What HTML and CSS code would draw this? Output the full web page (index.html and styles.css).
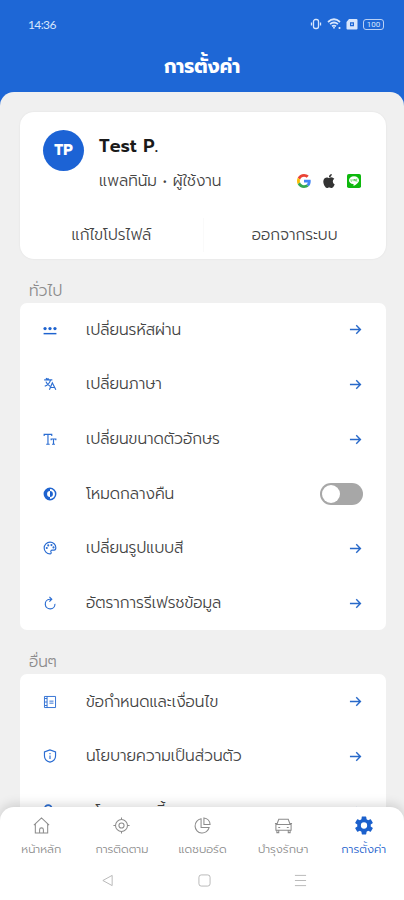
FILE: index.html
```html
<!DOCTYPE html>
<html lang="th">
<head>
<meta charset="utf-8">
<title>การตั้งค่า</title>
<link rel="stylesheet" href="styles.css">
</head>
<body>
<div class="phone">
  <header class="header">
    <div class="status">
      <span class="time">14:36</span>
      <div class="status-icons">
        <svg width="12" height="12" viewBox="0 0 12 12" fill="none" stroke="currentColor" stroke-width="1.300"><rect x="3.500" y="1.500" width="5" height="9" rx="2"/><path d="M1.500 4.500v3M10.500 4.500v3"/></svg>
        <svg width="14" height="12" viewBox="0 0 14 12" fill="none" stroke="currentColor" stroke-width="1.700"><path d="M1 4Q7-1.500 13 4M3 6.200Q7 2.800 11 6.200M5 8.300q2-1.500 4 0"/><path d="M7 9v1.500M12.500 9v2"/></svg>
        <svg width="12" height="12" viewBox="0 0 12 12"><path fill="currentColor" fill-rule="evenodd" d="M3 1h7.500a1 1 0 0 1 1 1v8.500a1 1 0 0 1-1 1h-9a1 1 0 0 1-1-1V4zM4 4.300v4h4v-4z"/><path d="M5.200 5.500h1.500v1.500H5.200z" fill="currentColor"/></svg>
        <span class="battery">100</span>
      </div>
    </div>
    <h1 class="title">การตั้งค่า</h1>
  </header>

  <main class="content">
    <section class="profile">
      <div class="profile-top">
        <div class="avatar">TP</div>
        <div class="who">
          <div class="name">Test P.</div>
          <div class="role-line">
            <span class="role">แพลทินัม • ผู้ใช้งาน</span>
            <div class="providers">
              <svg width="14" height="14" viewBox="0 0 48 48"><path fill="#ea4335" d="M24 9.500c3.540 0 6.710 1.220 9.210 3.600l6.850-6.850C35.900 2.380 30.470 0 24 0 14.620 0 6.510 5.380 2.560 13.220l7.980 6.190C12.430 13.720 17.740 9.500 24 9.500z"/><path fill="#4285f4" d="M46.980 24.550c0-1.570-.15-3.090-.38-4.550H24v9.020h12.940c-.58 2.960-2.260 5.480-4.780 7.180l7.730 6c4.510-4.180 7.090-10.360 7.090-17.650z"/><path fill="#fbbc05" d="M10.530 28.590A14.500 14.500 0 0 1 9.770 24c0-1.600.27-3.140.76-4.590l-7.980-6.190A23.900 23.900 0 0 0 0 24c0 3.880.92 7.540 2.560 10.780z"/><path fill="#34a853" d="M24 48c6.480 0 11.930-2.130 15.890-5.810l-7.730-6c-2.150 1.450-4.920 2.300-8.160 2.300-6.260 0-11.570-4.220-13.470-9.910l-7.980 6.190C6.510 42.620 14.620 48 24 48z"/></svg>
              <svg width="14" height="14" viewBox="0 0 24 24"><path fill="#333" d="M12.150 6.900c-.95 0-2.420-1.080-3.960-1.040-2.040.03-3.910 1.180-4.960 3.010-2.120 3.680-.55 9.100 1.520 12.090 1.010 1.450 2.210 3.090 3.790 3.040 1.520-.07 2.090-.99 3.930-.99 1.830 0 2.350.99 3.960.95 1.640-.03 2.680-1.480 3.680-2.950 1.160-1.690 1.640-3.320 1.660-3.420-.04-.01-3.180-1.220-3.220-4.860-.03-3.040 2.480-4.490 2.600-4.560-1.430-2.090-3.620-2.320-4.390-2.380-2-.16-3.680 1.090-4.610 1.110zM15.530 3.830C16.370 2.820 16.930 1.400 16.770 0c-1.210.05-2.660.8-3.530 1.820-.78.9-1.450 2.340-1.270 3.710 1.340.1 2.710-.69 3.560-1.700"/></svg>
              <svg width="14" height="14" viewBox="0 0 14 14"><rect width="14" height="14" rx="1.800" fill="#0db80d"/><path fill="#fff" d="M7 2.200c-2.900 0-5 1.700-5 4 0 2.100 1.700 3.600 4.200 3.900.7.100.4 1 .3 1.800C9 10.800 12 8.700 12 6.200c0-2.300-2.100-4-5-4z"/><path d="M4 5v2.200h1M6 5v2.200M7.200 7.200V5l1.200 2.200V5M10.500 5H9.400v2.200h1.100" stroke="#0db80d" stroke-width=".5" fill="none"/></svg>
            </div>
          </div>
        </div>
      </div>
      <div class="profile-actions">
        <span>แก้ไขโปรไฟล์</span>
        <span>ออกจากระบบ</span>
      </div>
    </section>

    <h2 class="group-title">ทั่วไป</h2>
    <section class="group">
      <div class="row"><svg class="ico" viewBox="0 0 24 24"><path d="M1 17h22v2.500H1z"/><circle cx="3.500" cy="9.500" r="2.800"/><circle cx="12" cy="9.500" r="2.800"/><circle cx="20.500" cy="9.500" r="2.800"/></svg><span class="label">เปลี่ยนรหัสผ่าน</span><svg class="arrow" viewBox="0 0 14 14"><path d="M1 7h11M7.800 2.500 12.300 7l-4.500 4.500"/></svg></div>
      <div class="row"><svg class="ico line" viewBox="0 0 24 24"><path d="M2 5h14M9 2v3M13 5c-1 4-5 9-10 11M5 8c1 3 4 6 7 8M5 2l3 2M11 22l5-12 6 12M13 18h7"/></svg><span class="label">เปลี่ยนภาษา</span><svg class="arrow" viewBox="0 0 14 14"><path d="M1 7h11M7.800 2.500 12.300 7l-4.500 4.500"/></svg></div>
      <div class="row"><svg class="ico line" viewBox="0 0 24 24"><path d="M2 7V4h13v3M8.500 4v17M5.500 21h6M14 14v-2h8v2M18 12v9M15.500 21h5"/></svg><span class="label">เปลี่ยนขนาดตัวอักษร</span><svg class="arrow" viewBox="0 0 14 14"><path d="M1 7h11M7.800 2.500 12.300 7l-4.500 4.500"/></svg></div>
      <div class="row"><svg class="ico" viewBox="0 0 24 24"><path fill-rule="evenodd" d="M12 1a11 11 0 1 0 0 22 11 11 0 0 0 0-22zm0 2.500a8.500 8.500 0 0 1 0 17V17a5 5 0 0 1 0-10z"/><path d="M12 7a5 5 0 0 1 0 10z"/></svg><span class="label">โหมดกลางคืน</span><span class="toggle"></span></div>
      <div class="row"><svg class="ico line" viewBox="0 0 24 24"><path d="M12 2a10 10 0 0 0 0 20c2 0 2.500-1.500 1.700-3-.8-1.800 0-3.500 2-3.500H19c2 0 3-2 3-4C22 6 17.500 2 12 2z"/><circle cx="6.500" cy="12" r=".8"/><circle cx="9" cy="7.500" r=".8"/><circle cx="14.500" cy="7" r=".8"/><circle cx="18" cy="11" r=".8"/></svg><span class="label">เปลี่ยนรูปแบบสี</span><svg class="arrow" viewBox="0 0 14 14"><path d="M1 7h11M7.800 2.500 12.300 7l-4.500 4.500"/></svg></div>
      <div class="row"><svg class="ico line" viewBox="0 0 24 24"><path d="M14 5.500h-2.500a8.300 8.300 0 1 0 9 8M11 1.500l4 4-4 4"/></svg><span class="label">อัตราการรีเฟรชข้อมูล</span><svg class="arrow" viewBox="0 0 14 14"><path d="M1 7h11M7.800 2.500 12.300 7l-4.500 4.500"/></svg></div>
    </section>

    <h2 class="group-title">อื่นๆ</h2>
    <section class="group">
      <div class="row"><svg class="ico line thin" viewBox="0 0 24 24"><path d="M2.500 2.500h19v19h-19zM7 2.500v19M3 6h4M3 12h4M3 18h4M11 10.500h7M11 14h7"/></svg><span class="label">ข้อกำหนดและเงื่อนไข</span><svg class="arrow" viewBox="0 0 14 14"><path d="M1 7h11M7.800 2.500 12.300 7l-4.500 4.500"/></svg></div>
      <div class="row"><svg class="ico line" viewBox="0 0 24 24"><path d="M12 1.500 2.500 5v7c0 5 4 9 9.500 10.500 5.500-1.500 9.500-5.500 9.500-10.500V5zM12 7v2M12 11v6"/></svg><span class="label">นโยบายความเป็นส่วนตัว</span><svg class="arrow" viewBox="0 0 14 14"><path d="M1 7h11M7.800 2.500 12.300 7l-4.500 4.500"/></svg></div>
      <div class="row"><svg class="ico line bold" viewBox="0 0 24 24"><path d="M3 22V8a6 6 0 0 1 12 0v14z"/></svg><span class="label">นโยบายคุกกี้</span><svg class="arrow" viewBox="0 0 14 14"><path d="M1 7h11M7.800 2.500 12.300 7l-4.500 4.500"/></svg></div>
    </section>
  </main>

  <footer class="bottom">
    <nav class="tabs">
      <div class="tab"><svg viewBox="0 0 20 20"><path d="M2 9.500 10 2l8 7.500M3.500 8v10h13V8M8 18v-3.500q0-2 2-2t2 2V18"/></svg><span>หน้าหลัก</span></div>
      <div class="tab"><svg viewBox="0 0 20 20"><circle cx="10" cy="10" r="6.300"/><circle cx="10" cy="10" r="2.700"/><path d="M10 1.500v2.200M10 16.300v2.200M1.500 10h2.200M16.300 10h2.200"/></svg><span>การติดตาม</span></div>
      <div class="tab"><svg viewBox="0 0 20 20"><path d="M8.500 3a7.500 7.500 0 1 0 8.500 9H8.500zM11.500 2v7h6.500a7 7 0 0 0-6.500-7z"/></svg><span>แดชบอร์ด</span></div>
      <div class="tab"><svg viewBox="0 0 20 20"><path d="M2 9h16v6H2zM3 9l2-5.500h10L17 9M3 15v2.500h2V15M15 15v2.500h2V15M4.500 12h2M13.500 12h2M1 8h2M17 8h2"/></svg><span>บำรุงรักษา</span></div>
      <div class="tab active"><svg viewBox="2 2 20 20"><path d="M19.430 12.980c.04-.32.070-.64.070-.98s-.03-.66-.07-.98l2.110-1.650c.19-.15.240-.42.120-.64l-2-3.460c-.12-.22-.39-.3-.61-.22l-2.490 1c-.52-.4-1.080-.73-1.690-.98l-.38-2.650A.49.490 0 0 0 14 2h-4c-.25 0-.46.180-.49.420l-.38 2.650c-.61.25-1.170.59-1.690.98l-2.490-1c-.23-.09-.49 0-.61.220l-2 3.460c-.13.220-.07.490.12.640l2.110 1.650c-.04.320-.07.650-.07.980s.03.660.07.980l-2.110 1.650c-.19.150-.24.420-.12.640l2 3.460c.12.220.39.300.61.220l2.490-1c.52.400 1.080.730 1.690.980l.38 2.650c.03.240.24.420.49.420h4c.25 0 .46-.18.490-.42l.38-2.650c.61-.25 1.170-.59 1.690-.98l2.490 1c.23.090.49 0 .61-.22l2-3.460c.12-.22.070-.49-.12-.64zM12 15.500a3.500 3.500 0 1 1 0-7 3.500 3.500 0 0 1 0 7z"/></svg><span>การตั้งค่า</span></div>
    </nav>
    <div class="system">
      <svg viewBox="0 0 14 14"><path d="M12 1.500v11L2 7z"/></svg>
      <svg viewBox="0 0 14 14"><rect x="1" y="1" width="12" height="12" rx="2.500"/></svg>
      <svg viewBox="0 0 14 14"><path d="M1 1.500h12M1 7h12M1 12.500h12"/></svg>
    </div>
  </footer>
</div>
</body>
</html>
```
FILE: styles.css
```css
* { box-sizing: border-box; }
body { margin: 0; font-family: "Prompt", "Kanit", "Noto Sans Thai", "Open Sans", sans-serif; color: #444; }
.phone { position: relative; width: 404px; height: 900px; overflow: hidden; background: #1e67d6; }
.header { height: 92px; color: #fff; }
.status { display: flex; justify-content: space-between; align-items: center; height: 48px; padding: 0 20px 0 28px; color: #d8e6fc; }
.time { font: 12px Lato, sans-serif; letter-spacing: -.6px; }
.status-icons { display: flex; align-items: center; gap: 5px; }
.status-icons svg { display: block; }
.battery { width: 21px; height: 11px; border: 1px solid #b9d0f5; border-radius: 3px; font: 8px/9px Roboto, sans-serif; text-align: center; }
.title { margin: 0; height: 38px; line-height: 38px; font-size: 19px; text-align: center; }
.content { height: 808px; padding: 19.500px 18.500px 0 20px; background: #f0f0f0; border-radius: 14px 14px 0 0; }
.profile { height: 147px; padding: 18px 23px 0; background: #fff; border-radius: 14px; box-shadow: 0 0 2px rgba(0,0,0,.08); }
.profile-top { display: flex; gap: 15px; height: 88px; }
.avatar { width: 41px; height: 41px; border-radius: 50%; background: #1c63d5; color: #fff; font-size: 15px; font-weight: 700; line-height: 40px; text-align: center; }
.who { flex: 1; }
.name { height: 34px; font-size: 18px; font-weight: 600; letter-spacing: .15px; line-height: 33px; color: #1a1a1a; }
.role-line { display: flex; justify-content: space-between; align-items: center; height: 34px; }
.role { font-size: 15.400px; font-weight: 300; white-space: nowrap; }
.providers { display: flex; gap: 11px; margin-right: 1.500px; }
.providers svg { display: block; }
.profile-actions { display: grid; grid-template-columns: 1fr 1fr; height: 34px; line-height: 34px; margin: 0 -23px; text-align: center; font-size: 15.400px; font-weight: 300; }
.profile-actions span + span { border-left: 1px solid #fafafa; }
.group-title { margin: 0; height: 44px; padding: 7px 0 0 9px; font-size: 15.400px; font-weight: 300; line-height: 50px; color: #8c8c8c; }
.group { background: #fff; border-radius: 7px; }
.row { display: flex; align-items: center; height: 54.670px; padding: 0 22px 0 23px; }
.ico { width: 14px; height: 14px; margin-right: 29px; fill: #1e63cf; }
.line { fill: none; stroke: #2b6dd2; stroke-width: 2; }
.thin { stroke-width: 1.600; }
.bold { stroke-width: 3; }
.label { flex: 1; font-size: 15.450px; font-weight: 300; white-space: nowrap; }
.arrow { width: 13px; height: 13px; margin-right: 2px; fill: none; stroke: #2869c9; stroke-width: 1.500; }
.toggle { width: 43px; height: 22px; padding: 2px; margin-right: 1px; border-radius: 11px; background: #a7a7a7; }
.toggle::before { content: ""; display: block; width: 18px; height: 18px; border-radius: 50%; background: #fff; }
.bottom { position: absolute; left: 0; right: 0; bottom: 0; height: 93px; padding-top: 9px; background: #fff; border-radius: 14px 14px 0 0; box-shadow: 0 -2px 12px rgba(0,0,0,.16); }
.tabs { display: grid; grid-template-columns: repeat(5, 1fr); height: 50px; padding-left: 1px; }
.tab { display: flex; flex-direction: column; align-items: center; color: #8c8c8c; }
.tab svg { width: 19px; height: 19px; fill: none; stroke: currentColor; stroke-width: 1.100; }
.tab span { font-size: 11.500px; font-weight: 300; line-height: 29px; white-space: nowrap; }
.tab.active { color: #1b60cc; }
.tab.active svg { width: 18px; height: 19px; fill: currentColor; stroke: none; }
.system { display: flex; justify-content: space-between; padding: 7.500px 97px 0 101px; }
.system svg { width: 13px; height: 13px; fill: none; stroke: #b4b4b4; stroke-width: 1; }
```
